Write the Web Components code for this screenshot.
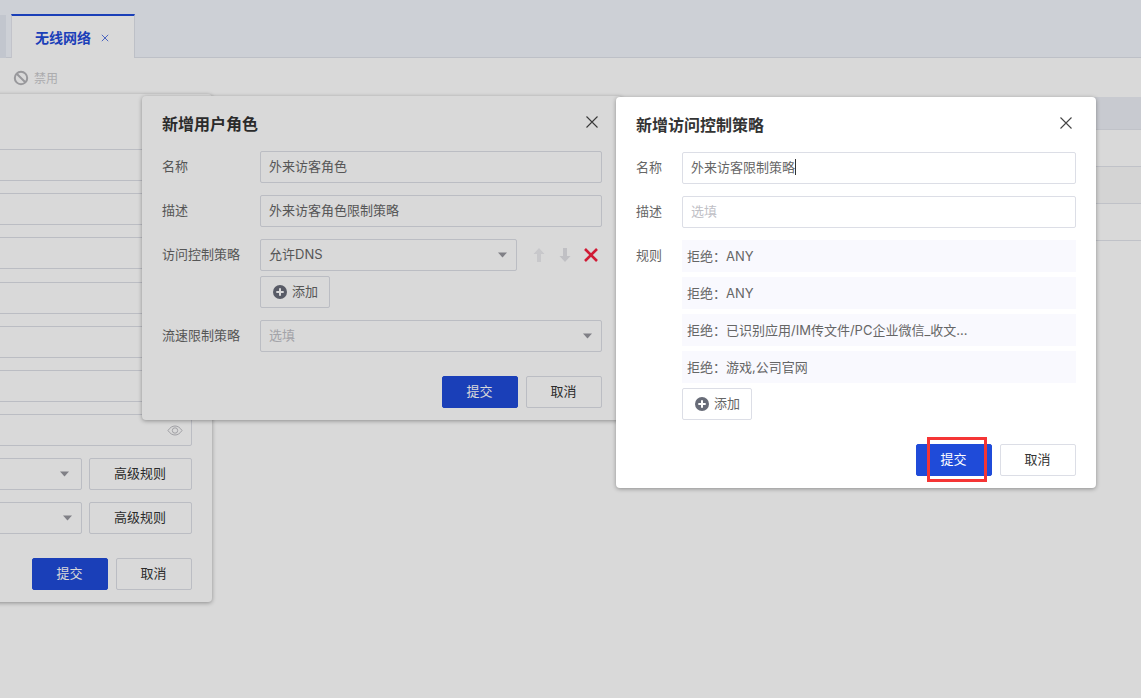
<!DOCTYPE html>
<html lang="zh">
<head>
<meta charset="utf-8">
<title>无线网络</title>
<style>
  html, body { margin: 0; height: 100%; overflow: hidden; background: #fff; }
  body {
    font-family: Inter, "Noto Sans CJK SC", sans-serif;
    font-size: 13px;
    color: #333;
  }
  .row-gap { margin-top: 1px; }
</style>
</head>
<body>
<app-page>
  <tab-bar label="无线网络"></tab-bar>
  <tool-bar label="禁用"></tool-bar>
  <data-table rows="3"></data-table>

  <!-- 最底层弹窗，大部分被遮住 -->
  <modal-window heading="" style="left:-268px; top:94px; z-index:1">
    <form-field label=""><text-input value=""></text-input></form-field>
    <form-field label=""><text-input value=""></text-input></form-field>
    <form-field label=""><text-input value=""></text-input></form-field>
    <form-field label="" class="row-gap"><text-input value=""></text-input></form-field>
    <form-field label=""><text-input value=""></text-input></form-field>
    <form-field label=""><text-input value=""></text-input></form-field>
    <form-field label=""><text-input value="" eye></text-input></form-field>
    <form-field label="" ><select-input value="" style="flex:1" arrow-right="12"></select-input><app-button style="width:103px;margin-left:7px">高级规则</app-button></form-field>
    <form-field label=""><select-input value="" style="flex:1" arrow-right="9"></select-input><app-button style="width:103px;margin-left:7px">高级规则</app-button></form-field>
    <app-button slot="footer" kind="primary">提交</app-button>
    <app-button slot="footer">取消</app-button>
  </modal-window>

  <modal-window heading="新增用户角色" closable style="left:142px; top:96px; z-index:2">
    <form-field label="名称"><text-input value="外来访客角色"></text-input></form-field>
    <form-field label="描述"><text-input value="外来访客角色限制策略"></text-input></form-field>
    <form-field label="访问控制策略">
      <div style="flex:1;display:flex;flex-direction:column;gap:5px;min-width:0">
        <div style="display:flex;align-items:center">
          <select-input value="允许DNS" style="width:257px"></select-input>
          <order-icons style="margin-left:16px"></order-icons>
        </div>
        <div><app-button icon="plus" style="width:70px">添加</app-button></div>
      </div>
    </form-field>
    <form-field label="流速限制策略"><select-input placeholder="选填" style="flex:1"></select-input></form-field>
    <app-button slot="footer" kind="primary">提交</app-button>
    <app-button slot="footer">取消</app-button>
  </modal-window>

  <page-mask></page-mask>

  <modal-window heading="新增访问控制策略" closable label-width="46" style="left:616px; top:97px; z-index:4">
    <form-field label="名称" label-width="46"><text-input value="外来访客限制策略" caret></text-input></form-field>
    <form-field label="描述" label-width="46"><text-input placeholder="选填"></text-input></form-field>
    <form-field label="规则" label-width="46">
      <div style="flex:1;display:flex;flex-direction:column;gap:5px;min-width:0">
        <rule-row>拒绝：ANY</rule-row>
        <rule-row>拒绝：ANY</rule-row>
        <rule-row>拒绝：已识别应用/IM传文件/PC企业微信_收文...</rule-row>
        <rule-row>拒绝：游戏,公司官网</rule-row>
        <div><app-button icon="plus" style="width:70px">添加</app-button></div>
      </div>
    </form-field>
    <app-button slot="footer" kind="primary">提交</app-button>
    <app-button slot="footer">取消</app-button>
  </modal-window>

  <red-mark style="left:927px; top:437px; width:60px; height:45px"></red-mark>
</app-page>

<script>
  class AppPage extends HTMLElement {
    constructor() {
      super();
      this.attachShadow({ mode: "open" }).innerHTML = `
      <style>
        :host { display: flex; flex-direction: column; position: relative; width: 100%; height: 100vh; overflow: hidden; }
      </style>
      <slot></slot>`;
    }
  }
  customElements.define("app-page", AppPage);

  class TabBar extends HTMLElement {
    connectedCallback() {
      this.attachShadow({ mode: "open" }).innerHTML = `
      <style>
        :host { display: flex; align-items: flex-end; padding-top: 14px; box-sizing: border-box; background: #f1f5fc; border-bottom: 1px solid #dfe2ea; height: 58px; gap: 5px; flex-shrink: 0; }
        .stub { width: 6px; height: 43px; background: #e4e9f2; margin-bottom: -1px; }
        .tab { width: 124px; height: 44px; box-sizing: border-box; margin-bottom: -1px; padding-top: 1px; background: #fff; border-top: 2px solid #1f4bd9; border-left: 1px solid #e4e6ee; border-right: 1px solid #dfe2ea; display: flex; align-items: center; padding-left: 23px; color: #1f4bd9; font-size: 14px; font-weight: 700; line-height: 20px; }
        svg { margin-left: 10px; margin-top: 1px; }
      </style>
      <div class="stub"></div>
      <div class="tab"><span>${this.getAttribute("label")}</span>
        <svg width="8" height="8" viewBox="0 0 8 8"><path d="M.8.8l6.400 6.400M7.200.8L.8 7.200" stroke="#5b78e2" stroke-width="1" fill="none"/></svg>
      </div>`;
    }
  }
  customElements.define("tab-bar", TabBar);

  class ToolBar extends HTMLElement {
    connectedCallback() {
      this.attachShadow({ mode: "open" }).innerHTML = `
      <style>
        :host { display: flex; align-items: center; height: 39px; padding-left: 13px; box-sizing: border-box; flex-shrink: 0; color: #cacacd; font-size: 12px; gap: 5px; }
      </style>
      <svg width="16" height="16" viewBox="0 0 16 16" fill="none" stroke="#b4b4b8" stroke-width="2"><circle cx="8" cy="8" r="6.200"/><path d="M3.700 3.700l8.600 8.600"/></svg>
      <span>${this.getAttribute("label")}</span>`;
    }
  }
  customElements.define("tool-bar", ToolBar);

  class DataTable extends HTMLElement {
    connectedCallback() {
      const n = Number(this.getAttribute("rows"));
      let rows = "";
      for (let i = 0; i < n; i++) rows += `<div class="row ${i == 1 ? "alt" : ""}"></div>`;
      this.attachShadow({ mode: "open" }).innerHTML = `
      <style>
        :host { display: block; }
        .head { height: 33px; box-sizing: border-box; background: #ebeef5; border-bottom: 1px solid #e2e4ec; }
        .row { height: 37px; box-sizing: border-box; border-bottom: 1px solid #e2e4ec; }
        .alt { background: #f9f9f9; }
      </style>
      <div class="head"></div>${rows}`;
    }
  }
  customElements.define("data-table", DataTable);

  class PageMask extends HTMLElement {
    constructor() {
      super();
      this.attachShadow({ mode: "open" }).innerHTML = `
      <style>
        :host { display: block; position: absolute; inset: 0; z-index: 3; background: rgba(0,0,0,.15); }
      </style>`;
    }
  }
  customElements.define("page-mask", PageMask);

  class ModalWindow extends HTMLElement {
    connectedCallback() {
      const closeIcon = this.hasAttribute("closable")
        ? `<svg class="close" width="12" height="12" viewBox="0 0 12 12"><path d="M.5.5l11 11M11.500.5l-11 11" stroke="#444" stroke-width="1.100" fill="none"/></svg>`
        : "";
      this.attachShadow({ mode: "open" }).innerHTML = `
      <style>
        :host { display: block; position: absolute; width: 480px; box-sizing: border-box; background: #fff; border-radius: 4px; box-shadow: 0 1px 4px rgba(0,0,0,.35); padding: 0 20px 12px; }
        header { height: 55px; box-sizing: border-box; padding: 0 4px 0 0; display: flex; align-items: center; justify-content: space-between; }
        h2 { margin: 0; font-size: 16px; font-weight: 700; line-height: 22px; color: #333; }
        .close { margin-top: -3px; }
        .body { display: flex; flex-direction: column; gap: 12px; }
        footer { display: flex; justify-content: flex-end; gap: 8px; margin-top: 24px; }
        ::slotted([slot="footer"]) { width: 76px; }
      </style>
      <header><h2>${this.getAttribute("heading")}</h2>${closeIcon}</header>
      <div class="body"><slot></slot></div>
      <footer><slot name="footer"></slot></footer>`;
    }
  }
  customElements.define("modal-window", ModalWindow);

  class FormField extends HTMLElement {
    connectedCallback() {
      const w = this.getAttribute("label-width") || 98;
      this.attachShadow({ mode: "open" }).innerHTML = `
      <style>
        :host { display: flex; align-items: flex-start; }
        label { width: ${w}px; flex-shrink: 0; line-height: 30px; height: 32px; color: #666; font-size: 13px; }
      </style>
      <label>${this.getAttribute("label")}</label><slot></slot>`;
    }
  }
  customElements.define("form-field", FormField);

  class TextInput extends HTMLElement {
    connectedCallback() {
      const value = this.getAttribute("value");
      const placeholder = this.getAttribute("placeholder");
      const caret = this.hasAttribute("caret") ? `<i class="caret"></i>` : "";
      const eye = this.hasAttribute("eye")
        ? `<svg class="eye" width="16" height="11" viewBox="0 0 16 11" fill="none" stroke="#bdbdc2" stroke-width="1"><path d="M1 5.500C3 2.500 5.300 1 8 1s5 1.500 7 4.500C13 8.500 10.700 10 8 10S3 8.500 1 5.500z"/><circle cx="8" cy="5.500" r="2.700"/></svg>`
        : "";
      this.attachShadow({ mode: "open" }).innerHTML = `
      <style>
        :host { display: flex; flex: 1; min-width: 0; align-items: center; height: 32px; box-sizing: border-box; border: 1px solid #dcdee6; border-radius: 2px; padding: 0 8px 2px; background: #fff; color: #666; font-size: 13px; line-height: 28px; }
        .ph { color: #c0c0c6; }
        .caret { display: inline-block; width: 1px; height: 16px; background: #333; }
        .eye { margin-left: auto; margin-top: 2px; }
      </style>
      <span class="${value ? "" : "ph"}">${value || placeholder || ""}</span>${caret}${eye}`;
    }
  }
  customElements.define("text-input", TextInput);

  class SelectInput extends HTMLElement {
    connectedCallback() {
      const value = this.getAttribute("value");
      const placeholder = this.getAttribute("placeholder");
      const right = this.getAttribute("arrow-right") || 9;
      this.attachShadow({ mode: "open" }).innerHTML = `
      <style>
        :host { display: flex; min-width: 0; align-items: center; justify-content: space-between; height: 32px; box-sizing: border-box; border: 1px solid #dcdee6; border-radius: 2px; padding: 0 ${right}px 0 8px; background: #fff; color: #666; font-size: 13px; line-height: 28px; }
        span { margin-bottom: 2px; }
        .ph { color: #c0c0c6; }
        svg { flex-shrink: 0; }
      </style>
      <span class="${value ? "" : "ph"}">${value || placeholder || ""}</span>
      <svg width="9" height="6" viewBox="0 0 9 6"><path d="M0 .5h9L4.500 5.500z" fill="#97979e"/></svg>`;
    }
  }
  customElements.define("select-input", SelectInput);

  class OrderIcons extends HTMLElement {
    connectedCallback() {
      this.attachShadow({ mode: "open" }).innerHTML = `
      <style>
        :host { display: flex; align-items: center; gap: 14px; }
        svg { display: block; }
      </style>
      <svg width="12" height="14" viewBox="0 0 12 14"><path d="M6 0l5.500 6H8v8H4V6H.5z" fill="#ebebef"/></svg>
      <svg width="12" height="14" viewBox="0 0 12 14"><path d="M6 14L.5 8H4V0h4v8h3.500z" fill="#e2e2e7"/></svg>
      <svg width="14" height="14" viewBox="0 0 14 14" style="margin-left:-1px"><path d="M1 1l12 12M13 1L1 13" stroke="#f5203f" stroke-width="2.600" fill="none"/></svg>`;
    }
  }
  customElements.define("order-icons", OrderIcons);

  class AppButton extends HTMLElement {
    connectedCallback() {
      const icon = this.getAttribute("icon") == "plus"
        ? `<svg width="14" height="14" viewBox="0 0 14 14" style="margin-top:2px"><circle cx="7" cy="7" r="7" fill="#686c78"/><path d="M7 3.300v7.400M3.300 7h7.400" stroke="#fff" stroke-width="2"/></svg>`
        : "";
      this.attachShadow({ mode: "open" }).innerHTML = `
      <style>
        :host { display: inline-flex; align-items: center; justify-content: center; gap: 5px; height: 32px; box-sizing: border-box; padding: 0 1px 2px 0; border: 1px solid #dcdee6; border-radius: 2px; background: #fff; color: #333; font-size: 13px; line-height: 28px; }
        :host([kind="primary"]) { background: #1f4bd9; border-color: #1f4bd9; color: #fff; }
        :host([icon]) { color: #666; padding: 0 0 2px 1px; }
      </style>
      ${icon}<slot></slot>`;
    }
  }
  customElements.define("app-button", AppButton);

  class RuleRow extends HTMLElement {
    constructor() {
      super();
      this.attachShadow({ mode: "open" }).innerHTML = `
      <style>
        :host { display: block; height: 32px; line-height: 32px; padding-left: 5px; background: #f9f9fe; color: #666; font-size: 13px; white-space: nowrap; overflow: hidden; }
      </style>
      <slot></slot>`;
    }
  }
  customElements.define("rule-row", RuleRow);

  class RedMark extends HTMLElement {
    constructor() {
      super();
      this.attachShadow({ mode: "open" }).innerHTML = `
      <style>
        :host { display: block; position: absolute; box-sizing: border-box; border: 3px solid #f53535; z-index: 5; pointer-events: none; }
      </style>`;
    }
  }
  customElements.define("red-mark", RedMark);
</script>
</body>
</html>
